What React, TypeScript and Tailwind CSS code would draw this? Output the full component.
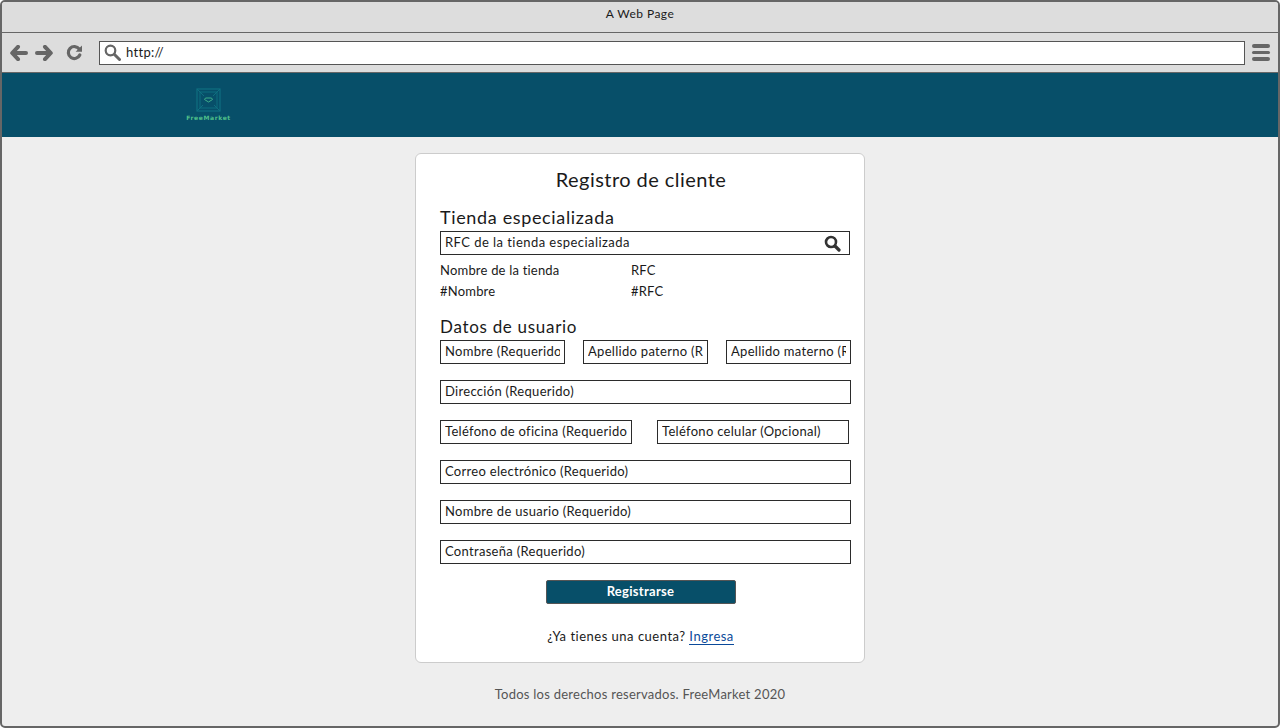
import React from "react";

const Field = ({ text, className = "" }: { text: string; className?: string }) => (
  <div className={`h-6 border border-[#2b2b2b] bg-white overflow-hidden whitespace-nowrap pl-1 pr-[4px] text-[13px] leading-[20px] tracking-[0.3px] text-[#1a1a1a] ${className}`}>
    <div className="overflow-hidden">{text}</div>
  </div>
);

export default function App() {
  return (
    <div className="h-[728px] w-[1280px] overflow-hidden rounded-[5px] border-2 border-[#666] bg-[#eee] flex flex-col font-['Lato','Liberation_Sans',sans-serif] text-[#1a1a1a]">
      <div className="h-[31px] shrink-0 border-b border-[#666] bg-[#ddd] text-center text-[12px] leading-[24px] tracking-[0.45px] text-[#1a1a1a]">A Web Page</div>
      <div className="h-[39px] shrink-0 flex items-center bg-[#ddd] pl-[8px] pr-[6px]">
        <svg width="18" height="16" viewBox="0 0 18 16"><path d="M8 1.8 2.2 8l5.8 6.2M3 8H16" fill="none" stroke="#666" strokeWidth="4" strokeLinecap="round" strokeLinejoin="round" /></svg>
        <svg width="18" height="16" viewBox="0 0 18 16" className="ml-[7px]"><path d="M10 1.8 15.8 8 10 14.2M15 8H2" fill="none" stroke="#666" strokeWidth="4" strokeLinecap="round" strokeLinejoin="round" /></svg>
        <svg width="17" height="17" viewBox="0 0 17 17" className="ml-[13px]"><path d="M13.8 11a6 6 0 1 1-.6-6" fill="none" stroke="#666" strokeWidth="3.2" strokeLinecap="round" /><path d="M16 1.4v6.4H9.6z" fill="#666" /></svg>
        <div className="ml-[16px] h-6 w-[1146px] border border-[#555] bg-white flex items-center pl-[4px]">
          <svg width="17" height="17" viewBox="0 0 17 17"><circle cx="6.5" cy="6.5" r="4.8" fill="none" stroke="#666" strokeWidth="2.2" /><path d="M10.5 10.5 15.5 15.5" stroke="#666" strokeWidth="3" strokeLinecap="round" /></svg>
          <span className="ml-[5px] text-[13px] leading-none tracking-[0.3px] text-[#1a1a1a]">http://</span>
        </div>
        <div className="ml-[7px] flex flex-col gap-[3px]">
          <div className="h-[3.5px] w-[18px] rounded-full bg-[#666]" />
          <div className="h-[3.5px] w-[18px] rounded-full bg-[#666]" />
          <div className="h-[3.5px] w-[18px] rounded-full bg-[#666]" />
        </div>
      </div>
      <div className="h-[65px] shrink-0 border-t border-[#666] bg-[#074f69] pl-[185px] pt-[15px]">
        <div className="w-[43px] flex flex-col items-center">
          <svg width="25" height="24" viewBox="0 0 25 24">
            <rect x="1" y="1" width="23" height="22" fill="none" stroke="#0f6f80" strokeWidth="1.2" />
            <rect x="4" y="4" width="17" height="16" fill="none" stroke="#0f6f80" strokeWidth="1" />
            <path d="M1 1 8 8M24 1 17 8M1 23 7 17M24 23 18 17" stroke="#0f6f80" strokeWidth="1" />
            <path d="M9.5 10h6l1 1.5-4 2.5-4-2.5z" fill="none" stroke="#3fae8a" strokeWidth="1" />
          </svg>
          <div className="mt-[2px] text-[6px] leading-[8px] font-bold tracking-[0.6px] text-[#4fc08a] font-['DejaVu_Sans',sans-serif]">FreeMarket</div>
        </div>
      </div>
      <div className="flex-1 flex flex-col items-center pt-4">
        <div className="h-[510px] w-[450px] rounded-[6px] border border-[#ccc] bg-white pl-6 pr-[13px]">
          <div className="pt-[12px] pr-[9px] text-center text-[20px] leading-[26px] tracking-[0.45px]">Registro de cliente</div>
          <div className="mt-[13px] text-[18px] leading-[25px] tracking-[0.65px]">Tienda especializada</div>
          <div className="mt-[1px] w-[410px] h-6 border border-[#2b2b2b] flex items-center justify-between pl-1 pr-[8px] text-[13px] tracking-[0.45px]">
            <span>RFC de la tienda especializada</span>
            <svg width="17" height="17" viewBox="0 0 17 17"><circle cx="7" cy="7" r="5" fill="none" stroke="#333" strokeWidth="2.6" /><path d="M11 11 15 15" stroke="#333" strokeWidth="3.2" strokeLinecap="round" /></svg>
          </div>
          <div className="mt-[5px] grid grid-cols-[191px_1fr] text-[13px] leading-[21px] tracking-[0.2px]">
            <div>Nombre de la tienda</div>
            <div>RFC</div>
            <div>#Nombre</div>
            <div>#RFC</div>
          </div>
          <div className="mt-[12px] text-[17px] leading-[25px] tracking-[0.7px]">Datos de usuario</div>
          <div className="mt-[1px] flex flex-col gap-4">
            <div className="flex gap-[18px]">
              <Field text="Nombre (Requerido)" className="w-[125px]" />
              <Field text="Apellido paterno (Requerido)" className="w-[125px]" />
              <Field text="Apellido materno (Requerido)" className="w-[125px]" />
            </div>
            <Field text="Dirección (Requerido)" className="w-[411px]" />
            <div className="flex gap-[25px]">
              <Field text="Teléfono de oficina (Requerido)" className="w-[192px]" />
              <Field text="Teléfono celular (Opcional)" className="w-[192px]" />
            </div>
            <Field text="Correo electrónico (Requerido)" className="w-[411px]" />
            <Field text="Nombre de usuario (Requerido)" className="w-[411px]" />
            <Field text="Contraseña (Requerido)" className="w-[411px]" />
            <div className="w-[401px] flex justify-center">
              <div className="h-6 w-[190px] rounded-[2px] border border-[#555] bg-[#074f69] text-center text-[13px] font-bold leading-[21px] tracking-[0.3px] text-white">Registrarse</div>
            </div>
          </div>
          <div className="mt-[22px] w-[401px] text-center text-[13px] leading-[20px] tracking-[0.5px]">
            ¿Ya tienes una cuenta? <span className="border-b border-[#0b4a9a] text-[#0b4a9a]">Ingresa</span>
          </div>
        </div>
        <div className="mt-[21px] text-[13px] leading-[20px] tracking-[0.25px] text-[#555]">Todos los derechos reservados. FreeMarket 2020</div>
      </div>
    </div>
  );
}
